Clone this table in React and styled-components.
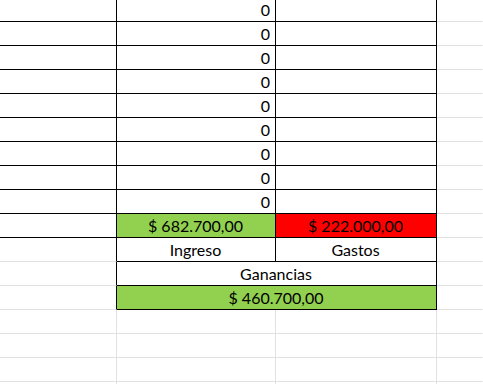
import React from "react";
import styled, { createGlobalStyle } from "styled-components";

const Global = createGlobalStyle`
  html, body { margin: 0; padding: 0; background: #fff; overflow: hidden; }
  body { font-family: Lato, "Open Sans", sans-serif; }
`;

const BLACK = "#000";
const GRID = "#e1e1e1";

const Sheet = styled.div`
  display: grid;
  grid-template-columns: 117px 159px 161px 1fr;
  grid-template-rows: 22px repeat(16, 24px);
  width: 483px;
  height: 384px;
  overflow: hidden;
`;

const Cell = styled.div`
  box-sizing: border-box;
  grid-column: span ${(p) => p.$span || 1};
  background: ${(p) => p.$bg || "#fff"};
  border-right: 1px solid ${(p) => p.$r || "transparent"};
  border-bottom: 1px solid ${(p) => p.$b || GRID};
  display: flex;
  align-items: flex-end;
  justify-content: ${(p) =>
    p.$align === "right" ? "flex-end" : p.$align === "center" ? "center" : "flex-start"};
  padding: 0 5px 2px 4px;
  font-size: 16px;
  line-height: 19px;
  color: #000;
  white-space: nowrap;
`;

const GREEN = "#92d050";
const RED = "#ff0000";

const rows = [];
for (let i = 0; i < 9; i++) rows.push({ kind: "zero" });
rows.push({ kind: "totals" });
rows.push({ kind: "labels" });
rows.push({ kind: "gan" });
rows.push({ kind: "result" });
for (let i = 0; i < 4; i++) rows.push({ kind: "empty" });

export default function App() {
  const cells = [];
  rows.forEach((row, i) => {
    const k = `r${i}`;
    const framed = i <= 12;
    const aBottom = i <= 9 ? BLACK : GRID;
    const aRight = framed ? BLACK : GRID;
    const bcB = framed ? BLACK : GRID;
    cells.push(<Cell key={k + "a"} $r={aRight} $b={aBottom} />);
    if (row.kind === "zero") {
      cells.push(<Cell key={k + "b"} $r={BLACK} $b={BLACK} $align="right">0</Cell>);
      cells.push(<Cell key={k + "c"} $r={BLACK} $b={BLACK} />);
    } else if (row.kind === "totals") {
      cells.push(<Cell key={k + "b"} $r={BLACK} $b={BLACK} $bg={GREEN} $align="center">$ 682.700,00</Cell>);
      cells.push(<Cell key={k + "c"} $r={BLACK} $b={BLACK} $bg={RED} $align="center">$ 222.000,00</Cell>);
    } else if (row.kind === "labels") {
      cells.push(<Cell key={k + "b"} $r={BLACK} $b={BLACK} $align="center">Ingreso</Cell>);
      cells.push(<Cell key={k + "c"} $r={BLACK} $b={BLACK} $align="center">Gastos</Cell>);
    } else if (row.kind === "gan") {
      cells.push(<Cell key={k + "bc"} $span={2} $r={BLACK} $b={BLACK} $align="center">Ganancias</Cell>);
    } else if (row.kind === "result") {
      cells.push(<Cell key={k + "bc"} $span={2} $r={BLACK} $b={BLACK} $bg={GREEN} $align="center">$ 460.700,00</Cell>);
    } else {
      cells.push(<Cell key={k + "b"} $r={GRID} $b={bcB} />);
      cells.push(<Cell key={k + "c"} $r={GRID} $b={bcB} />);
    }
    cells.push(<Cell key={k + "d"} $b={GRID} />);
  });
  return (
    <>
      <Global />
      <Sheet>{cells}</Sheet>
    </>
  );
}
